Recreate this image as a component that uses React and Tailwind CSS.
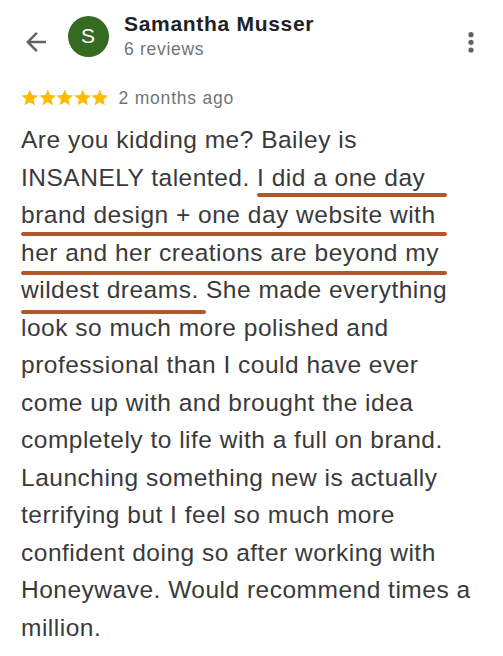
import React from 'react';

const lines = [
  'Are you kidding me? Bailey is',
  'INSANELY talented. I did a one day',
  'brand design + one day website with',
  'her and her creations are beyond my',
  'wildest dreams. She made everything',
  'look so much more polished and',
  'professional than I could have ever',
  'come up with and brought the idea',
  'completely to life with a full on brand.',
  'Launching something new is actually',
  'terrifying but I feel so much more',
  'confident doing so after working with',
  'Honeywave. Would recommend times a',
  'million.',
];

function Star() {
  return (
    <svg width="17.5" height="17.5" viewBox="1.5 1.5 21 21" fill="#fbbc04">
      <path d="M12 17.27L18.18 21l-1.64-7.03L22 9.24l-7.19-.61L12 2 9.19 8.63 2 9.24l5.46 4.73L5.82 21z" />
    </svg>
  );
}

export default function App() {
  return (
    <div
      className="w-[503px] h-[656px] bg-white overflow-hidden"
      style={{ fontFamily: '"Liberation Sans", Arial, sans-serif' }}
    >
      {/* header */}
      <div className="flex items-start">
        <svg className="ml-[21px] mt-[27px] shrink-0" width="30" height="30" viewBox="0 0 24 24" fill="#5f6368">
          <path d="M20 11H7.83l5.59-5.59L12 4l-8 8 8 8 1.41-1.41L7.83 13H20v-2z" />
        </svg>
        <div className="ml-[16.5px] mt-[15.5px] w-[41px] h-[41px] rounded-full bg-[#356a22] flex items-center justify-center text-white text-[21px] shrink-0">
          S
        </div>
        <div className="ml-[15.5px] mt-[11.5px] flex flex-col">
          <div className="text-[21px] leading-[24px] font-bold tracking-[0.7px] text-[#202124]">Samantha Musser</div>
          <div className="mt-[2.5px] text-[17.5px] leading-[22px] tracking-[0.7px] text-[#70757a]">6 reviews</div>
        </div>
        <svg className="ml-auto mr-[27px] mt-[30px] shrink-0" width="10" height="24" viewBox="0 0 10 24">
          <circle cx="5" cy="4.7" r="2.6" fill="#5f6368" />
          <circle cx="5" cy="12.3" r="2.6" fill="#5f6368" />
          <circle cx="5" cy="20" r="2.6" fill="#5f6368" />
        </svg>
      </div>

      {/* rating */}
      <div className="flex items-center px-[21px] mt-[26.5px]">
        <div className="flex">
          <Star />
          <Star />
          <Star />
          <Star />
          <Star />
        </div>
        <span className="ml-[10px] text-[17.5px] leading-[22px] tracking-[0.8px] text-[#70757a]">2 months ago</span>
      </div>

      {/* review text */}
      <div className="relative mx-[21px] mt-[12.8px] text-[24.5px] leading-[37.5px] tracking-[0.5px] text-[#3a3a3a] whitespace-nowrap">
        {lines.map((l, i) => (
          <div key={i}>{l}</div>
        ))}
        <div className="absolute left-[236px] top-[71.4px] w-[190px] h-[4px] rounded-full bg-[#b4562a]" />
        <div className="absolute left-0 top-[110.7px] w-[426px] h-[4px] rounded-full bg-[#b4562a]" />
        <div className="absolute left-0 top-[149.4px] w-[426px] h-[4px] rounded-full bg-[#b4562a]" />
        <div className="absolute left-0 top-[188.4px] w-[185px] h-[4px] rounded-full bg-[#b4562a]" />
      </div>
    </div>
  );
}
